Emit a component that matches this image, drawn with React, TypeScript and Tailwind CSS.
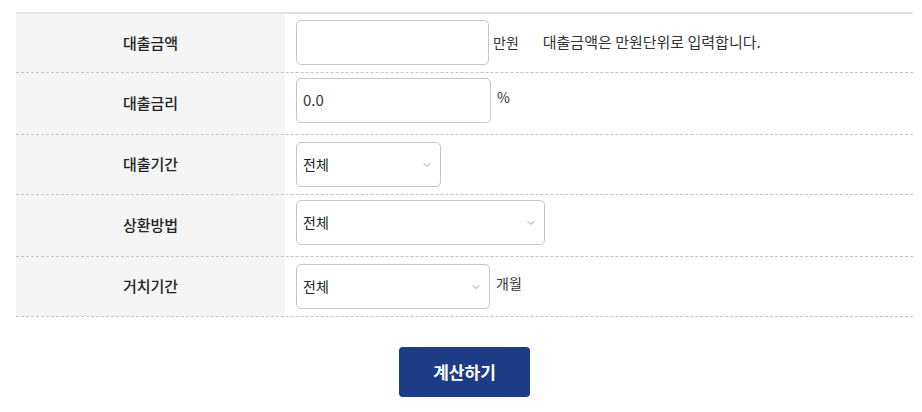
import { ChevronDown } from 'lucide-react'

const font = { fontFamily: '"Noto Sans CJK KR", "Noto Sans", sans-serif' }

type Row = {
	label: string
	height: string
	pad: string
	field: React.ReactNode
}

const TextBox = ({ width, value }: { width: string; value?: string }) => (
	<div
		className={`${width} flex h-[45px] items-center rounded-[5px] border border-[#c6c6c6] bg-white px-[6px] text-[15px] text-[#333]`}
	>
		{value}
	</div>
)

const SelectBox = ({ width }: { width: string }) => (
	<div
		className={`${width} flex h-[45px] items-center justify-between rounded-[5px] border border-[#c6c6c6] bg-white pl-[6px] pr-[7px] text-[14px] text-[#222]`}
	>
		<span>전체</span>
		<ChevronDown className="size-[12px] text-[#777]" strokeWidth={1.5} />
	</div>
)

const rows: Row[] = [
	{
		label: '대출금액',
		height: 'h-[59px]',
		pad: 'pt-[6px]',
		field: (
			<div className="flex items-center">
				<TextBox width="w-[193px]" />
				<span className="ml-[4px] text-[14px] text-[#333]">만원</span>
				<span className="ml-[24px] text-[15px] text-[#333]">
					대출금액은 만원단위로 입력합니다.
				</span>
			</div>
		)
	},
	{
		label: '대출금리',
		height: 'h-[62px]',
		pad: 'pt-[5px]',
		field: (
			<div className="flex items-start">
				<TextBox width="w-[195px]" value="0.0" />
				<span className="ml-[6px] mt-[9px] text-[14px] text-[#333]">%</span>
			</div>
		)
	},
	{
		label: '대출기간',
		height: 'h-[60px]',
		pad: 'pt-[7px]',
		field: <SelectBox width="w-[145px]" />
	},
	{
		label: '상환방법',
		height: 'h-[62px]',
		pad: 'pt-[5px]',
		field: <SelectBox width="w-[249px]" />
	},
	{
		label: '거치기간',
		height: 'h-[60px]',
		pad: 'pt-[7px]',
		field: (
			<div className="flex items-start">
				<SelectBox width="w-[194px]" />
				<span className="ml-[6px] mt-[9px] text-[14px] text-[#333]">개월</span>
			</div>
		)
	}
]

export default function App() {
	return (
		<div className="min-h-screen bg-white pt-[12px]" style={font}>
			<div className="ml-[16px] w-[897px]">
				<div className="border-t-2 border-[#e4e4e4]">
					{rows.map(row => (
						<div
							key={row.label}
							className={`flex ${row.height} border-b border-dashed border-[#c4c4c4]`}
						>
							<div className="flex w-[269px] items-center justify-center bg-[#f5f5f5] text-[15px] font-medium text-[#222]">
								{row.label}
							</div>
							<div className={`flex-1 pl-[11px] ${row.pad}`}>{row.field}</div>
						</div>
					))}
				</div>

				<div className="mt-[30px] flex justify-center">
					<button className="h-[50px] w-[131px] rounded-[4px] bg-[#1d3c86] text-[17px] font-bold text-white">
						계산하기
					</button>
				</div>
			</div>
		</div>
	)
}
